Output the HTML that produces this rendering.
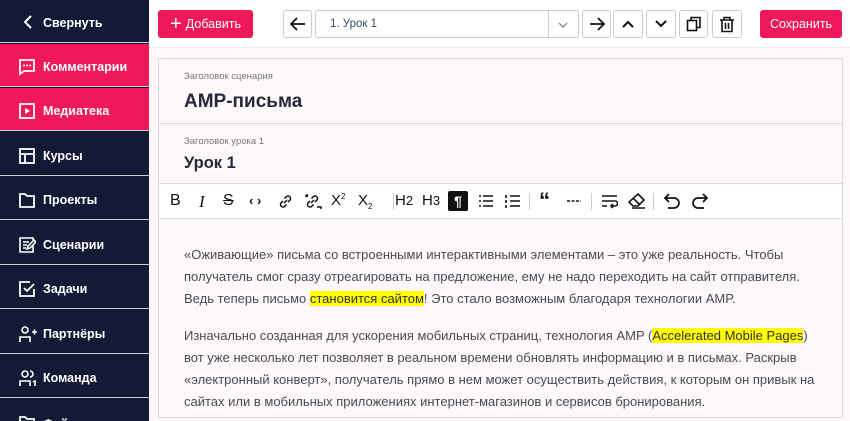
<!DOCTYPE html>
<html style="overflow:hidden"><head><meta charset="utf-8"><style>
*{box-sizing:border-box;margin:0;padding:0}
html,body{width:850px;height:421px;overflow:hidden}
body{background:#fff;font-family:"Liberation Sans",sans-serif;position:relative}
.sb{position:absolute;left:0;top:0;width:149px;height:421px;background:#121a35;overflow:hidden}
.it{position:absolute;left:0;width:149px;height:43px;color:#fff;font-size:12.5px;font-weight:bold;display:flex;align-items:center;padding-left:43px;padding-top:3px;border-bottom:1px solid #c9ccd6}
.it.p{background:#f0185a}
.it svg{position:absolute;left:18px;top:14px}
.top{position:absolute;left:149px;top:0;right:0;height:48px;background:#fff;border-bottom:1px solid #eee}
.strip{position:absolute;left:149px;top:48px;right:0;height:373px;background:#fdf8f9}
.btn{position:absolute;top:10px;height:28px;background:#f0185a;color:#fff;border-radius:3px;font-size:12.5px;display:flex;align-items:center;justify-content:center}
.ob{position:absolute;top:10px;height:28px;border:1px solid #c9ccd6;border-radius:3px;background:#fff;display:flex;align-items:center;justify-content:center}
.panel{position:absolute;left:158px;top:58px;width:685px;height:360px;border:1px solid #d8d8de;background:#fdf9fa;overflow:hidden}
.lab{position:absolute;left:25px;font-size:9.5px;color:#777}
.ttl{position:absolute;left:25px;color:#262a3a;font-weight:bold}
.hr{position:absolute;left:0;right:0;height:1px;background:#d8d8de}
.tb{position:absolute;top:125px;left:0;right:0;height:34px;background:#fff}
.tb span{position:absolute;top:8px;font-size:15px;color:#111}
.sep{position:absolute;top:9px;width:1px;height:17px;background:#ccc}
.txt{position:absolute;left:25px;top:185px;font-size:13px;color:#4a4a55;line-height:22px;white-space:nowrap}
.hl{background:#ffff00;color:#333}
</style></head><body>
<div class="sb">
<div class="it" style="top:0"><svg width="12" height="16" viewBox="0 0 12 16" style="left:22px;top:14px"><path d="M9 2L3 8l6 6" stroke="#fff" stroke-width="2" fill="none"/></svg>Свернуть</div>
<div class="it p" style="top:44px"><svg width="18" height="18" viewBox="0 0 18 18"><path d="M2 2h14v11H6l-4 3z" stroke="#fff" stroke-width="1.8" fill="none"/><circle cx="6" cy="7.5" r="1" fill="#fff"/><circle cx="9" cy="7.5" r="1" fill="#fff"/><circle cx="12" cy="7.5" r="1" fill="#fff"/></svg>Комментарии</div>
<div class="it p" style="top:88px"><svg width="18" height="18" viewBox="0 0 18 18"><rect x="2" y="2" width="14" height="14" stroke="#fff" stroke-width="1.8" fill="none"/><path d="M7 6l5 3-5 3z" fill="#fff"/></svg>Медиатека</div>
<div class="it" style="top:133px"><svg width="18" height="18" viewBox="0 0 18 18"><rect x="2" y="2" width="14" height="14" stroke="#fff" stroke-width="1.8" fill="none"/><path d="M2 7h14M7 7v9" stroke="#fff" stroke-width="1.8"/></svg>Курсы</div>
<div class="it" style="top:177px"><svg width="18" height="18" viewBox="0 0 18 18"><path d="M2 3h5l2 2h7v11H2z" stroke="#fff" stroke-width="1.8" fill="none"/></svg>Проекты</div>
<div class="it" style="top:222px"><svg width="18" height="18" viewBox="0 0 18 18"><path d="M15 9v7H2V2h13v2M5 6h6M5 9h4M5 12h3M9 13l1-3 6-6 2 2-6 6z" stroke="#fff" stroke-width="1.6" fill="none"/></svg>Сценарии</div>
<div class="it" style="top:266px"><svg width="18" height="18" viewBox="0 0 18 18"><path d="M16 9v7H2V2h10M6 8l3 3 7-7" stroke="#fff" stroke-width="1.8" fill="none"/></svg>Задачи</div>
<div class="it" style="top:311px"><svg width="20" height="18" viewBox="0 0 20 18"><circle cx="7" cy="5" r="3" stroke="#fff" stroke-width="1.6" fill="none"/><path d="M2 17v-5h10v5M14 7h5M16.5 4.5v5" stroke="#fff" stroke-width="1.6" fill="none"/></svg>Партнёры</div>
<div class="it" style="top:355px"><svg width="20" height="18" viewBox="0 0 20 18"><circle cx="7" cy="5" r="3" stroke="#fff" stroke-width="1.6" fill="none"/><path d="M2 17v-5h10v5M12 2a3 3 0 010 6M15 13l2-1v5" stroke="#fff" stroke-width="1.6" fill="none"/></svg>Команда</div>
<div class="it" style="top:400px;height:21px;border-bottom:none;align-items:flex-start;padding-top:17px"><svg width="18" height="18" viewBox="0 0 18 18"><path d="M2 3h5l2 2h7v11H2z" stroke="#fff" stroke-width="1.8" fill="none"/></svg>Файлы</div>
</div>
<div class="top"></div>
<div class="strip"></div>
<div class="btn" style="left:158px;width:95px"><span style="font-size:20px;margin-right:4px;line-height:1">+</span>Добавить</div>
<div class="ob" style="left:283px;width:29px"><svg width="16" height="14" viewBox="0 0 16 14"><path d="M15 7H2M7 1L1 7l6 6" stroke="#111" stroke-width="1.8" fill="none"/></svg></div>
<div class="ob" style="left:315px;width:264px;justify-content:flex-start;padding-left:14px;font-size:11.5px;color:#3a4a6a">1. Урок 1<div style="position:absolute;left:232px;top:0;width:1px;height:26px;background:#c9ccd6"></div><svg style="position:absolute;right:10px;top:11px" width="10" height="6" viewBox="0 0 10 6"><path d="M1 1l4 4 4-4" stroke="#889" stroke-width="1.4" fill="none"/></svg></div>
<div class="ob" style="left:582px;width:29px"><svg width="16" height="14" viewBox="0 0 16 14"><path d="M1 7h13M9 1l6 6-6 6" stroke="#111" stroke-width="1.8" fill="none"/></svg></div>
<div class="ob" style="left:613px;width:30px"><svg width="12" height="8" viewBox="0 0 12 8"><path d="M1 7l5-5 5 5" stroke="#111" stroke-width="2" fill="none"/></svg></div>
<div class="ob" style="left:646px;width:30px"><svg width="12" height="8" viewBox="0 0 12 8"><path d="M1 1l5 5 5-5" stroke="#111" stroke-width="2" fill="none"/></svg></div>
<div class="ob" style="left:679px;width:29px"><svg width="16" height="16" viewBox="0 0 16 16"><rect x="1.5" y="4.5" width="9" height="10" stroke="#111" stroke-width="1.6" fill="none"/><path d="M5 4V1.5h9v10h-3.5" stroke="#111" stroke-width="1.6" fill="none"/></svg></div>
<div class="ob" style="left:712px;width:30px"><svg width="16" height="17" viewBox="0 0 16 17"><path d="M1 4h14M5 4V1.5h6V4M3 4v11.5h10V4M6.5 7v6M9.5 7v6" stroke="#111" stroke-width="1.6" fill="none"/></svg></div>
<div class="btn" style="left:760px;width:82px">Сохранить</div>
<div class="panel">
<div class="lab" style="top:12px">Заголовок сценария</div>
<div class="ttl" style="top:32px;font-size:19px">AMP-письма</div>
<div class="hr" style="top:64px"></div>
<div class="lab" style="top:77px">Заголовок урока 1</div>
<div class="ttl" style="top:95px;font-size:16.5px">Урок 1</div>
<div class="hr" style="top:124px"></div>
<div class="tb">
<span style="left:11px;font-size:16px">B</span>
<span style="left:40px;font-family:'Liberation Serif',serif;font-style:italic;font-size:17px">I</span>
<span style="left:64px;text-decoration:line-through;font-size:16px">S</span>
<span style="left:90px;font-size:13px;top:9px;font-weight:bold">‹ ›</span>
<svg style="position:absolute;left:118px;top:9px" width="17" height="17" viewBox="0 0 17 17"><path d="M7 10l3-3M6 8L4 10a2.5 2.5 0 003.5 3.5L9.5 11.5M11 9l2-2a2.5 2.5 0 00-3.5-3.5L7.5 5.5" stroke="#111" stroke-width="1.5" fill="none"/></svg>
<svg style="position:absolute;left:145px;top:8px" width="18" height="18" viewBox="0 0 18 18"><path d="M7 11l3-3M6 9L4 11a2.5 2.5 0 003.5 3.5L9.5 12.5M11 10l2-2a2.5 2.5 0 00-3.5-3.5L7.5 6.5M3 2v3M1 4h3M13 15h4v2" stroke="#111" stroke-width="1.5" fill="none"/></svg>
<span style="left:172px">X<sup style="font-size:8px">2</sup></span>
<span style="left:199px">X<sub style="font-size:8px">2</sub></span>
<div class="sep" style="left:234px"></div>
<span style="left:236px">H<span style="position:static;font-size:13px">2</span></span>
<span style="left:263px">H<span style="position:static;font-size:13px">3</span></span>
<div style="position:absolute;left:289px;top:7px;width:20px;height:20px;background:#111;border-radius:2px;color:#fff;font-size:14px;text-align:center;line-height:20px;font-weight:bold">¶</div>
<svg style="position:absolute;left:319px;top:9px" width="16" height="16" viewBox="0 0 16 16"><path d="M5 3h10M5 8h10M5 13h10M1 3h2M1 8h2M1 13h2" stroke="#111" stroke-width="1.6"/></svg>
<svg style="position:absolute;left:346px;top:9px" width="16" height="16" viewBox="0 0 16 16"><path d="M5 3h10M5 8h10M5 13h10M1 2v3M1 7v3M1 12v3" stroke="#111" stroke-width="1.6"/></svg>
<div class="sep" style="left:370px"></div>
<span style="left:380px;font-size:22px;font-weight:bold;top:4px">“</span>
<svg style="position:absolute;left:407px;top:9px" width="16" height="16" viewBox="0 0 16 16"><path d="M1 8h14" stroke="#111" stroke-width="1.6" stroke-dasharray="3 1.5"/></svg>
<div class="sep" style="left:432px"></div>
<svg style="position:absolute;left:442px;top:9px" width="17" height="16" viewBox="0 0 17 16"><path d="M1 3h15M1 8h13a2 2 0 010 5h-4M12 11l-2 2 2 2M1 13h5" stroke="#111" stroke-width="1.6" fill="none"/></svg>
<svg style="position:absolute;left:469px;top:8px" width="18" height="17" viewBox="0 0 18 17"><path d="M10 2l6 6-6 6H5L1 10zM5 6l6 6M4 16h13" stroke="#111" stroke-width="1.6" fill="none"/></svg>
<div class="sep" style="left:494px"></div>
<svg style="position:absolute;left:505px;top:8px" width="16" height="17" viewBox="0 0 16 17"><path d="M5 2L1 6l4 4M1 6h9a5 5 0 010 10H4" stroke="#111" stroke-width="1.7" fill="none"/></svg>
<svg style="position:absolute;left:533px;top:8px" width="16" height="17" viewBox="0 0 16 17"><path d="M11 2l4 4-4 4M15 6H6a5 5 0 000 10h6" stroke="#111" stroke-width="1.7" fill="none"/></svg>
</div>
<div class="hr" style="top:159px"></div>
<div class="txt">«Оживающие» письма со встроенными интерактивными элементами – это уже реальность. Чтобы<br>получатель смог сразу отреагировать на предложение, ему не надо переходить на сайт отправителя.<br>Ведь теперь письмо <span class="hl">становится сайтом</span>! Это стало возможным благодаря технологии AMP.<br><div style="height:15px"></div>Изначально созданная для ускорения мобильных страниц, технология AMP (<span class="hl">Accelerated Mobile Pages</span>)<br>вот уже несколько лет позволяет в реальном времени обновлять информацию и в письмах. Раскрыв<br>«электронный конверт», получатель прямо в нем может осуществить действия, к которым он привык на<br>сайтах или в мобильных приложениях интернет-магазинов и сервисов бронирования.</div>
</div>
</body></html>
